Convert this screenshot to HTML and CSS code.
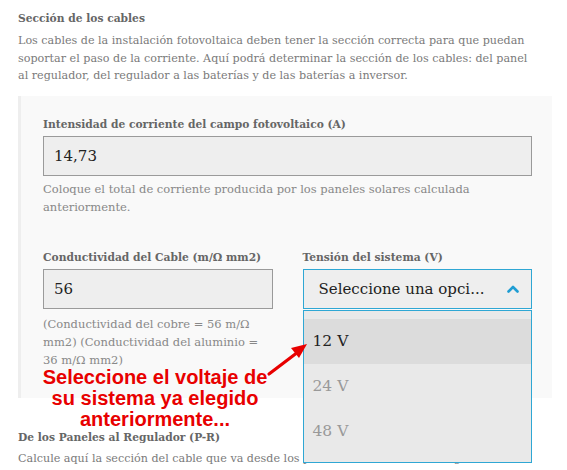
FILE: index.html
```html
<!DOCTYPE html>
<html lang="es">
<head>
<meta charset="utf-8">
<title>Sección de los cables</title>
<link rel="stylesheet" href="styles.css">
</head>
<body>
<main class="page">
  <h3 class="sec-title">Sección de los cables</h3>
  <p class="intro">Los cables de la instalación fotovoltaica deben tener la sección correcta para que puedan<br>soportar el paso de la corriente. Aquí podrá determinar la sección de los cables: del panel<br>al regulador, del regulador a las baterías y de las baterías a inversor.</p>

  <section class="panel">
    <div class="field">
      <label class="label">Intensidad de corriente del campo fotovoltaico (A)</label>
      <div class="input">14,73</div>
      <p class="help">Coloque el total de corriente producida por los paneles solares calculada<br>anteriormente.</p>
    </div>
    <div class="row">
      <div class="field">
        <label class="label">Conductividad del Cable (m/Ω mm2)</label>
        <div class="input">56</div>
        <p class="help">(Conductividad del cobre = 56 m/Ω<br>mm2) (Conductividad del aluminio =<br>36 m/Ω mm2)</p>
      </div>
      <div class="field">
        <label class="label">Tensión del sistema (V)</label>
        <div class="select-wrap">
          <div class="select">
            <span>Seleccione una opci...</span>
            <svg class="chev" width="12" height="8" viewBox="0 0 12 8"><path d="M1.5 6.5 L6 2 L10.5 6.5" fill="none" stroke="#1f9dd3" stroke-width="2.6" stroke-linecap="round" stroke-linejoin="round"/></svg>
          </div>
          <ul class="dropdown">
            <li class="opt active">12 V</li>
            <li class="opt">24 V</li>
            <li class="opt">48 V</li>
          </ul>
        </div>
      </div>
    </div>
  </section>

  <h4 class="sub-title">De los Paneles al Regulador (P-R)</h4>
  <p class="sub-text">Calcule aquí la sección del cable que va desde los paneles solares hasta el regulador de carga.</p>

  <div class="callout">Seleccione el voltaje de<br>su sistema ya elegido<br>anteriormente...</div>
  <svg class="arrow" width="56" height="48" viewBox="0 0 56 48">
    <line x1="7" y1="40" x2="36" y2="18" stroke="#e80000" stroke-width="3.2" stroke-linecap="round"/>
    <polygon points="45,10 29,14 37,24" fill="#e80000"/>
  </svg>
</main>
</body>
</html>
```

FILE: styles.css
```css
* { box-sizing: border-box; }
html, body { margin: 0; padding: 0; background: #fff; }
body { font-family: "DejaVu Serif", "Liberation Serif", serif; color: #7a7a7a; }

.page { position: relative; width: 567px; height: 470px; overflow: hidden; padding: 10px 15px 0 18px; }

.sec-title { margin: 0; font-size: 10.7px; line-height: 18px; font-weight: bold; color: #666; }
.intro { margin: 4px 0 0; font-size: 11.15px; line-height: 17.5px; color: #7a7a7a; white-space: nowrap; }

.panel { margin-top: 11px; width: 534px; background: #f9f9f9; border-left: 3px solid #eeeeee; padding: 21px 20px 29px 22px; }

.label { display: block; font-size: 10.7px; line-height: 16px; font-weight: bold; color: #666; white-space: nowrap; }
.input { margin-top: 3px; height: 40px; background: #eeeeee; border: 1px solid #9a9a9a; padding: 0 10px; font-size: 15px; line-height: 38px; color: #222; }
.help { margin: 4px 0 0; font-size: 11.5px; line-height: 18px; color: #888; white-space: nowrap; }

.row { display: grid; grid-template-columns: 1fr 1fr; column-gap: 30px; margin-top: 34px; }
.row .help { margin-top: 6px; }

.select-wrap { position: relative; margin-top: 3px; }
.select { height: 40px; background: #eeeeee; border: 1px solid #2fa7d4; padding: 0 12px 0 15px; display: flex; align-items: center; justify-content: space-between; font-size: 15px; color: #222; }
.chev { display: block; }

.dropdown { position: absolute; left: 0; right: 0; top: 41px; z-index: 2; margin: 0; padding: 8px 0; list-style: none; background: #e9e9e9; border: 1px solid #2fa7d4; }
.opt { height: 45px; line-height: 45px; padding-left: 9px; font-size: 15.5px; color: #999; }
.opt.active { background: #dcdcdc; color: #222; }

.sub-title { margin: 31px 0 0; font-size: 10.7px; line-height: 18px; font-weight: bold; color: #666; }
.sub-text { margin: 2px 0 0; max-width: 505px; font-size: 11.15px; line-height: 20px; color: #7a7a7a; }

.callout { position: absolute; left: 25px; top: 367px; width: 260px; text-align: center; font-family: "Liberation Sans", Arial, sans-serif; font-weight: bold; font-size: 20px; line-height: 21px; color: #e80000; z-index: 3; }
.arrow { position: absolute; left: 262px; top: 334px; z-index: 3; }
```
